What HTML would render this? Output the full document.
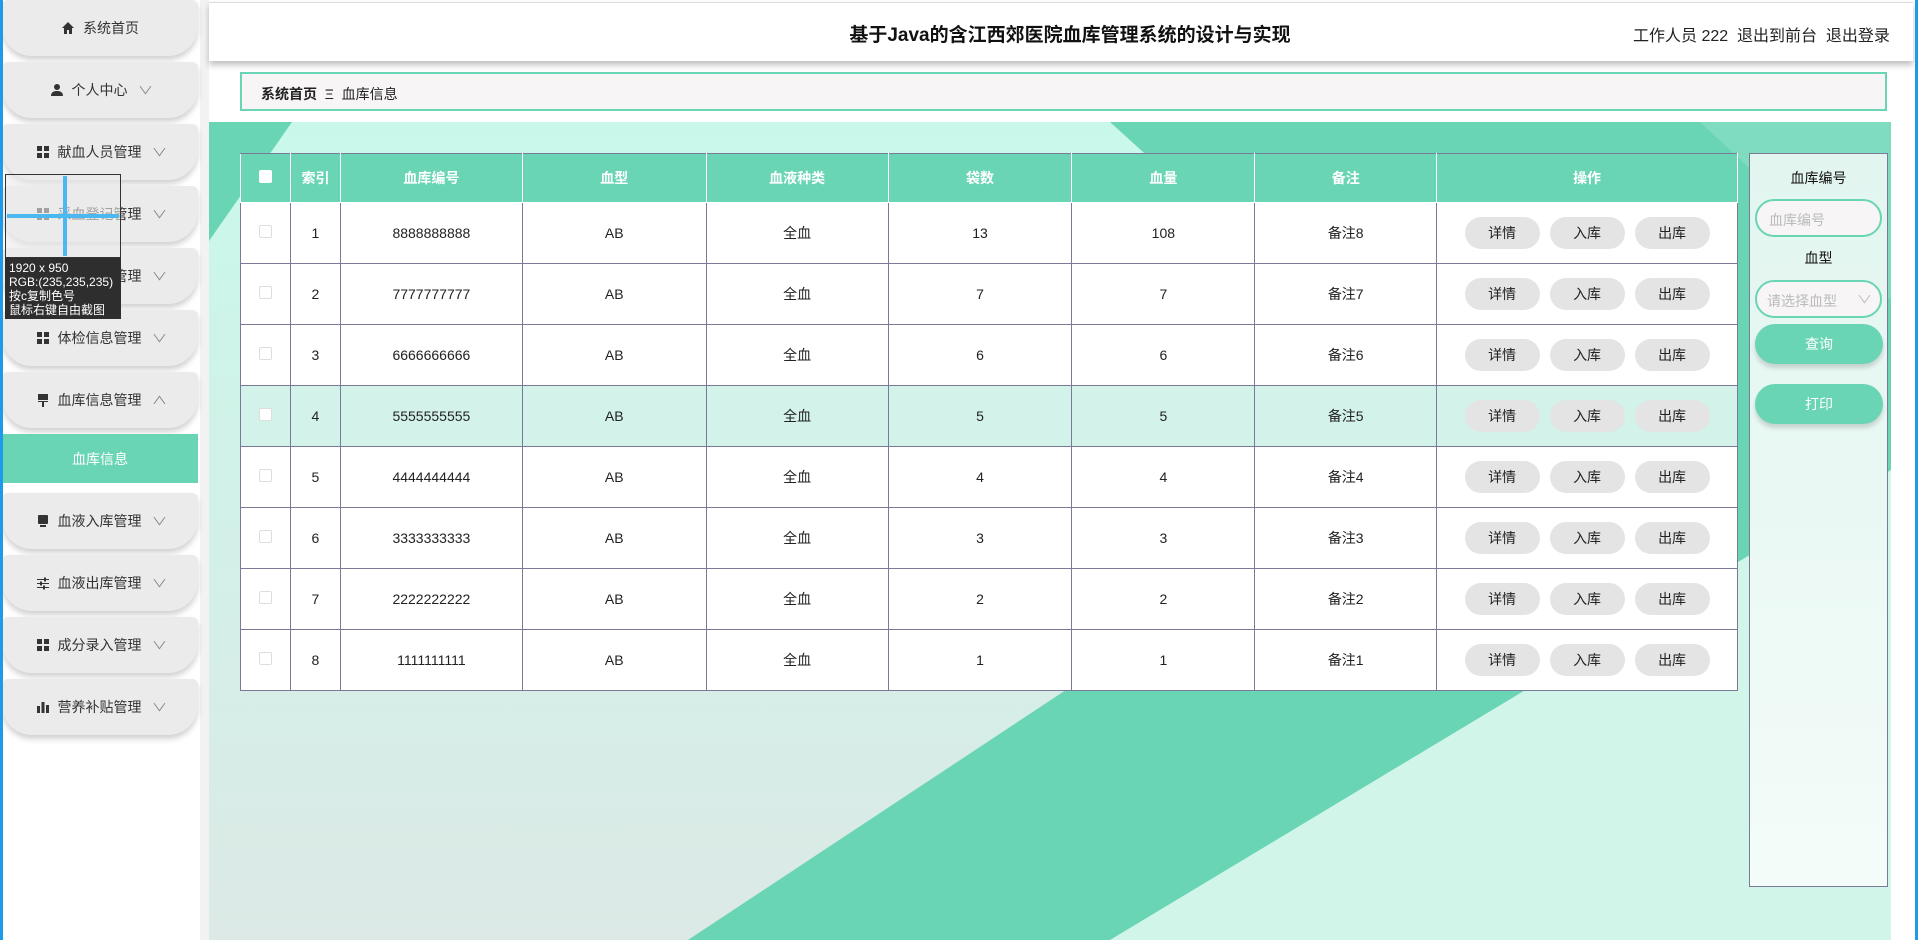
<!DOCTYPE html>
<html><head><meta charset="utf-8">
<style>
*{box-sizing:border-box;margin:0;padding:0}
body{width:1918px;height:940px;overflow:hidden;background:#fff;font-family:"Liberation Sans","Noto Sans CJK SC",sans-serif;position:relative;color:#333}
.abs{position:absolute}
.side{left:0;top:0;width:200px;height:940px;background:#fff}
.mi{position:absolute;left:2px;width:196px;height:56px;background:#ebebeb;border-radius:6px 6px 30px 30px;box-shadow:0 4px 6px rgba(0,0,0,.18);display:flex;align-items:center;justify-content:center;font-size:14px;color:#333;gap:8px}
.mi svg{width:14px;height:14px}
.mi .ar{font-size:11px;color:#888;margin-left:4px;transform:scaleX(1.4)}
.act{position:absolute;left:2px;top:434px;width:196px;height:49px;background:#6ad5b5;color:#fff;font-size:14px;display:flex;align-items:center;justify-content:center}
table{border-collapse:collapse;position:absolute;left:240px;top:153px;width:1498px;font-size:14px;background:#fff}
td,th{border:1px solid #7a7a98;text-align:center;height:61px;color:#222;font-weight:normal}
th{height:49px;background:#6ad5b5;color:#fff;font-weight:bold;border-color:#fff;border-top:1px solid #7a7a98}
tr.h td{background:#d3f2e9}
.b{display:inline-block;width:75px;height:32px;line-height:32px;border-radius:16px;background:#e4e4e4;margin:0 5px;color:#222}
.cb{display:inline-block;width:13px;height:13px;border:1px solid #ddd;background:#fff;border-radius:2px}
</style></head><body>
<div class="abs" style="left:0;top:0;width:3px;height:940px;background:#1e9be8;z-index:5"></div>
<div class="abs" style="right:0;top:0;width:3px;height:940px;background:#1e9be8;z-index:5"></div>
<div class="abs side"></div>
<div class="abs" style="left:200px;top:0;width:9px;height:940px;background:#f2f2f2"></div>

<div class="mi" style="top:0"><svg viewBox="0 0 14 14"><path d="M7 1L1 7h2v6h3V9h2v4h3V7h2z" fill="#333"/></svg>系统首页</div>
<div class="mi" style="top:62px"><svg viewBox="0 0 14 14"><circle cx="7" cy="4" r="3" fill="#333"/><path d="M1 13c0-4 3-5 6-5s6 1 6 5z" fill="#333"/></svg>个人中心<span class="ar">∨</span></div>
<div class="mi" style="top:124px"><svg viewBox="0 0 14 14" fill="#333"><rect x="1" y="1" width="5" height="5"/><rect x="8" y="1" width="5" height="5"/><rect x="1" y="8" width="5" height="5"/><rect x="8" y="8" width="5" height="5"/></svg>献血人员管理<span class="ar">∨</span></div>
<div class="mi" style="top:186px"><svg viewBox="0 0 14 14" fill="#333"><rect x="1" y="1" width="5" height="5"/><rect x="8" y="1" width="5" height="5"/><rect x="1" y="8" width="5" height="5"/><rect x="8" y="8" width="5" height="5"/></svg>采血登记管理<span class="ar">∨</span></div>
<div class="mi" style="top:248px"><svg viewBox="0 0 14 14" fill="#333"><rect x="1" y="1" width="5" height="5"/><rect x="8" y="1" width="5" height="5"/><rect x="1" y="8" width="5" height="5"/><rect x="8" y="8" width="5" height="5"/></svg>血液检测管理<span class="ar">∨</span></div>
<div class="mi" style="top:310px"><svg viewBox="0 0 14 14" fill="#333"><rect x="1" y="1" width="5" height="5"/><rect x="8" y="1" width="5" height="5"/><rect x="1" y="8" width="5" height="5"/><rect x="8" y="8" width="5" height="5"/></svg>体检信息管理<span class="ar">∨</span></div>
<div class="mi" style="top:372px"><svg viewBox="0 0 14 14" fill="#333"><rect x="2" y="1" width="10" height="6"/><rect x="2" y="8" width="10" height="1"/><rect x="6" y="9" width="2" height="5"/></svg>血库信息管理<span class="ar">∧</span></div>
<div class="act">血库信息</div>
<div class="mi" style="top:493px"><svg viewBox="0 0 14 14" fill="#333"><rect x="2" y="1" width="10" height="9" rx="1"/><rect x="4" y="11" width="6" height="2"/></svg>血液入库管理<span class="ar">∨</span></div>
<div class="mi" style="top:555px"><svg viewBox="0 0 14 14" fill="#333"><rect x="1" y="3" width="12" height="1"/><rect x="1" y="7" width="12" height="1"/><rect x="1" y="11" width="12" height="1"/><rect x="8" y="1.5" width="2" height="4"/><rect x="4" y="5.5" width="2" height="4"/><rect x="7" y="9.5" width="2" height="4"/></svg>血液出库管理<span class="ar">∨</span></div>
<div class="mi" style="top:617px"><svg viewBox="0 0 14 14" fill="#333"><rect x="1" y="1" width="5" height="5"/><rect x="8" y="1" width="5" height="5"/><rect x="1" y="8" width="5" height="5"/><rect x="8" y="8" width="5" height="5"/></svg>成分录入管理<span class="ar">∨</span></div>
<div class="mi" style="top:679px"><svg viewBox="0 0 14 14" fill="#333"><rect x="1" y="6" width="3" height="7"/><rect x="5.5" y="2" width="3" height="11"/><rect x="10" y="5" width="3" height="8"/></svg>营养补贴管理<span class="ar">∨</span></div>

<!-- screenshot tool overlay -->
<div class="abs" style="left:5px;top:174px;width:116px;height:145px;z-index:6">
 <div class="abs" style="left:0;top:0;width:116px;height:84px;border:1px solid #333;background:rgba(235,235,235,.6)"></div>
 <div class="abs" style="left:58px;top:2px;width:4px;height:80px;background:#4bb8ef"></div>
 <div class="abs" style="left:2px;top:40px;width:112px;height:4px;background:#4bb8ef"></div>
 <div class="abs" style="left:0;top:84px;width:116px;height:61px;background:#2e2e2e;color:#fff;font-size:12px;line-height:14px;padding:3px 4px">1920 x 950<br>RGB:(235,235,235)<br>按c复制色号<br>鼠标右键自由截图</div>
</div>

<!-- header -->
<div class="abs" style="left:209px;top:2px;width:1704px;height:59px;background:#fff;box-shadow:0 4px 6px rgba(0,0,0,.25);border-top:1px solid #ddd"></div>
<div class="abs" style="left:209px;top:20px;width:1200px;text-align:center;padding-left:0;font-size:19px;font-weight:bold;color:#111;left:470px;width:1200px">基于Java的含江西郊医院血库管理系统的设计与实现</div>
<div class="abs" style="left:1633px;top:22px;font-size:16px;color:#222;white-space:nowrap">工作人员 222&nbsp;&nbsp;退出到前台&nbsp;&nbsp;退出登录</div>

<!-- breadcrumb -->
<div class="abs" style="left:240px;top:72px;width:1647px;height:39px;border:2px solid #6ad5b5;background:#f7f5f5;font-size:14px;padding:10px 19px;color:#222"><b>系统首页</b>&nbsp; Ξ &nbsp;血库信息</div>

<!-- background -->
<svg class="abs" style="left:209px;top:122px" width="1682" height="818" viewBox="209 122 1682 818">
<defs><linearGradient id="g" x1="0" y1="0" x2="0" y2="1"><stop offset="0" stop-color="#c9f8ea"/><stop offset="1" stop-color="#dce9e6"/></linearGradient></defs>
<rect x="209" y="122" width="1682" height="818" fill="url(#g)"/>
<polygon points="1453,434 1891,200 1891,940 1110,940" fill="#d2f5ea"/>
<polygon points="209,122 292,122 209,241" fill="#6ad5b5"/>
<polygon points="1110,122 1891,122 1891,470 1110,940 688,940 1453,434" fill="#6ad5b5"/>
<polygon points="1700,122 1891,122 1891,300" fill="#7fdcc0"/>
</svg>

<table>
<colgroup><col style="width:50px"><col style="width:50px"><col style="width:182px"><col style="width:184px"><col style="width:182px"><col style="width:184px"><col style="width:183px"><col style="width:182px"><col style="width:301px"></colgroup>
<tr><th><span class="cb" style="border:none"></span></th><th>索引</th><th>血库编号</th><th>血型</th><th>血液种类</th><th>袋数</th><th>血量</th><th>备注</th><th>操作</th></tr>
<tr><td><span class="cb"></span></td><td>1</td><td>8888888888</td><td>AB</td><td>全血</td><td>13</td><td>108</td><td>备注8</td><td><span class="b">详情</span><span class="b">入库</span><span class="b">出库</span></td></tr>
<tr><td><span class="cb"></span></td><td>2</td><td>7777777777</td><td>AB</td><td>全血</td><td>7</td><td>7</td><td>备注7</td><td><span class="b">详情</span><span class="b">入库</span><span class="b">出库</span></td></tr>
<tr><td><span class="cb"></span></td><td>3</td><td>6666666666</td><td>AB</td><td>全血</td><td>6</td><td>6</td><td>备注6</td><td><span class="b">详情</span><span class="b">入库</span><span class="b">出库</span></td></tr>
<tr class="h"><td><span class="cb"></span></td><td>4</td><td>5555555555</td><td>AB</td><td>全血</td><td>5</td><td>5</td><td>备注5</td><td><span class="b">详情</span><span class="b">入库</span><span class="b">出库</span></td></tr>
<tr><td><span class="cb"></span></td><td>5</td><td>4444444444</td><td>AB</td><td>全血</td><td>4</td><td>4</td><td>备注4</td><td><span class="b">详情</span><span class="b">入库</span><span class="b">出库</span></td></tr>
<tr><td><span class="cb"></span></td><td>6</td><td>3333333333</td><td>AB</td><td>全血</td><td>3</td><td>3</td><td>备注3</td><td><span class="b">详情</span><span class="b">入库</span><span class="b">出库</span></td></tr>
<tr><td><span class="cb"></span></td><td>7</td><td>2222222222</td><td>AB</td><td>全血</td><td>2</td><td>2</td><td>备注2</td><td><span class="b">详情</span><span class="b">入库</span><span class="b">出库</span></td></tr>
<tr><td><span class="cb"></span></td><td>8</td><td>1111111111</td><td>AB</td><td>全血</td><td>1</td><td>1</td><td>备注1</td><td><span class="b">详情</span><span class="b">入库</span><span class="b">出库</span></td></tr>
</table>

<!-- side panel -->
<div class="abs" style="left:1749px;top:153px;width:139px;height:734px;border:1px solid #7a7a98;background:linear-gradient(#e2f5ef,#f3fcf9)"></div>
<div class="abs" style="left:1749px;top:168px;width:139px;text-align:center;font-size:14px;color:#111">血库编号</div>
<div class="abs" style="left:1755px;top:199px;width:127px;height:38px;border:2px solid #6ad5b5;border-radius:19px;background:#f7f5f5;font-size:14px;color:#bbb;padding:9px 12px">血库编号</div>
<div class="abs" style="left:1749px;top:248px;width:139px;text-align:center;font-size:14px;color:#111">血型</div>
<div class="abs" style="left:1755px;top:280px;width:127px;height:38px;border:2px solid #6ad5b5;border-radius:19px;background:#f7f5f5;font-size:14px;color:#bbb;padding:9px 10px">请选择血型<span style="position:absolute;right:10px;top:9px;color:#bbb;font-size:11px;transform:scaleX(1.4)">∨</span></div>
<div class="abs" style="left:1755px;top:324px;width:128px;height:40px;border-radius:20px;background:#6ad5b5;color:#fff;font-size:14px;text-align:center;line-height:40px;box-shadow:0 4px 5px rgba(0,0,0,.15)">查询</div>
<div class="abs" style="left:1755px;top:384px;width:128px;height:40px;border-radius:20px;background:#6ad5b5;color:#fff;font-size:14px;text-align:center;line-height:40px;box-shadow:0 4px 5px rgba(0,0,0,.15)">打印</div>
</body></html>
